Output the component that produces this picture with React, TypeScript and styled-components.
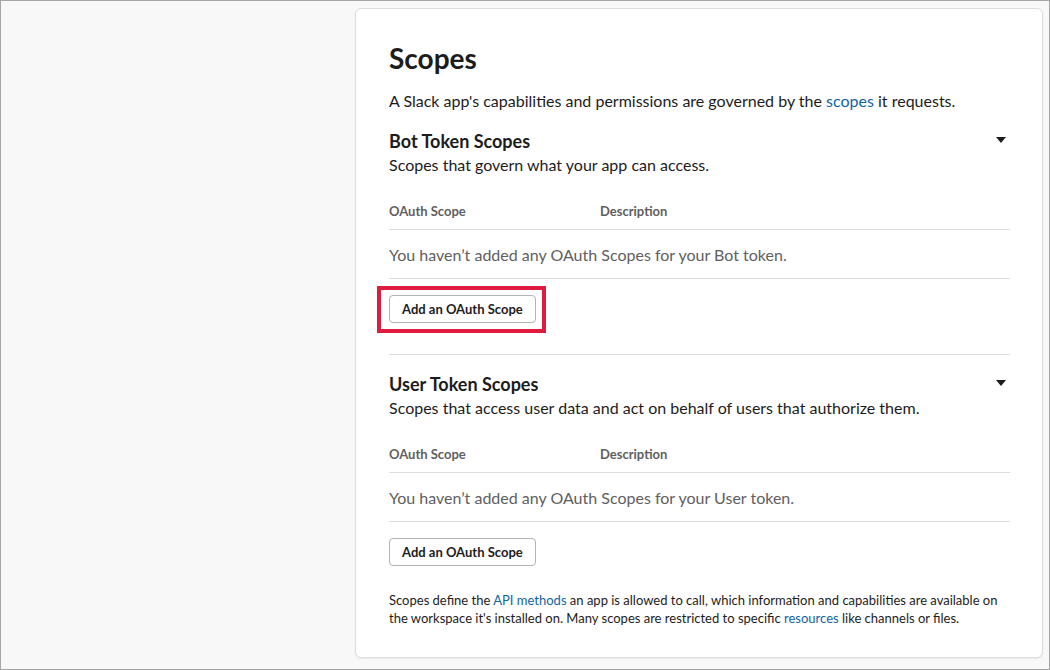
import React from "react";
import styled, { createGlobalStyle } from "styled-components";

const GlobalStyle = createGlobalStyle`
  * { box-sizing: border-box; }
  body {
    margin: 0;
    font-family: Lato, "Noto Sans", "Liberation Sans", sans-serif;
    color: #1d1c1d;
    -webkit-font-smoothing: antialiased;
  }
`;

const Frame = styled.div`
  width: 1050px;
  height: 670px;
  border: 1px solid #a6a6a6;
  background: #f8f8f8;
  display: grid;
  grid-template-columns: 354px 688px;
  padding-top: 7px;
  overflow: hidden;
`;

const Sidebar = styled.div``;

const Card = styled.div`
  background: #fff;
  border: 1px solid #dcdcdc;
  border-radius: 6px;
  box-shadow: 0 1px 2px rgba(0, 0, 0, 0.06);
  padding: 31px 32px 0 33px;
  height: 650px;
`;

const Title = styled.h1`
  margin: 0;
  font-size: 28px;
  line-height: 36px;
  font-weight: 700;
`;

const Lead = styled.p`
  margin: 14px 0 0;
  font-size: 16px;
  line-height: 22px;
`;

const Link = styled.a`
  color: #1264a3;
  text-decoration: none;
`;

const Section = styled.section<{ $divided?: boolean }>`
  margin-top: ${(p) => (p.$divided ? "31px" : "17px")};
  padding-top: ${(p) => (p.$divided ? "17px" : "0")};
  border-top: ${(p) => (p.$divided ? "1px solid #dddddd" : "none")};
`;

const SectionHead = styled.div`
  display: flex;
  justify-content: space-between;
  align-items: center;
`;

const SectionTitle = styled.h2`
  margin: 0;
  font-size: 18px;
  line-height: 24px;
  font-weight: 700;
`;

const Caret = styled.span`
  width: 0;
  height: 0;
  margin-right: 4px;
  margin-top: -2px;
  border-left: 5px solid transparent;
  border-right: 5px solid transparent;
  border-top: 6px solid #1d1c1d;
`;

const SectionSub = styled.p`
  margin: 0;
  font-size: 16px;
  line-height: 24px;
`;

const TableHead = styled.div`
  margin-top: 25px;
  display: grid;
  grid-template-columns: 211px 1fr;
  padding-bottom: 9px;
  border-bottom: 1px solid #dddddd;
  font-size: 13px;
  line-height: 18px;
  font-weight: 700;
  color: #616061;
`;

const EmptyRow = styled.div`
  height: 49px;
  display: flex;
  align-items: center;
  border-bottom: 1px solid #dddddd;
  font-size: 16px;
  color: #616061;
`;

const ButtonWrap = styled.div<{ $highlight?: boolean }>`
  position: relative;
  display: inline-block;
  margin-top: 16px;
  &::after {
    content: "";
    display: ${(p) => (p.$highlight ? "block" : "none")};
    position: absolute;
    left: -12px;
    right: -10px;
    top: -9px;
    bottom: -10px;
    border: 4px solid #e01b3f;
    pointer-events: none;
  }
`;

const Button = styled.button`
  height: 28px;
  padding: 0 12px;
  background: #fff;
  border: 1px solid #b3b3b3;
  border-radius: 4px;
  font-family: inherit;
  font-size: 13px;
  font-weight: 700;
  color: #1d1c1d;
  cursor: pointer;
`;

const Footnote = styled.p`
  margin: 25px 0 0;
  font-size: 13px;
  line-height: 18px;
`;

type ScopeSectionProps = {
  title: string;
  sub: string;
  token: string;
  divided?: boolean;
  highlight?: boolean;
};

const ScopeSection = ({ title, sub, token, divided, highlight }: ScopeSectionProps) => (
  <Section $divided={divided}>
    <SectionHead>
      <SectionTitle>{title}</SectionTitle>
      <Caret />
    </SectionHead>
    <SectionSub>{sub}</SectionSub>
    <TableHead>
      <span>OAuth Scope</span>
      <span>Description</span>
    </TableHead>
    <EmptyRow>You haven’t added any OAuth Scopes for your {token} token.</EmptyRow>
    <ButtonWrap $highlight={highlight}>
      <Button>Add an OAuth Scope</Button>
    </ButtonWrap>
  </Section>
);

export default function App() {
  return (
    <>
      <GlobalStyle />
      <Frame>
        <Sidebar />
        <Card>
          <Title>Scopes</Title>
          <Lead>
            A Slack app's capabilities and permissions are governed by the{" "}
            <Link href="#">scopes</Link> it requests.
          </Lead>
          <ScopeSection
            title="Bot Token Scopes"
            sub="Scopes that govern what your app can access."
            token="Bot"
            highlight
          />
          <ScopeSection
            divided
            title="User Token Scopes"
            sub="Scopes that access user data and act on behalf of users that authorize them."
            token="User"
          />
          <Footnote>
            Scopes define the <Link href="#">API methods</Link> an app is allowed to call,
            which information and capabilities are available on the workspace it's
            installed on. Many scopes are restricted to specific{" "}
            <Link href="#">resources</Link> like channels or files.
          </Footnote>
        </Card>
      </Frame>
    </>
  );
}
